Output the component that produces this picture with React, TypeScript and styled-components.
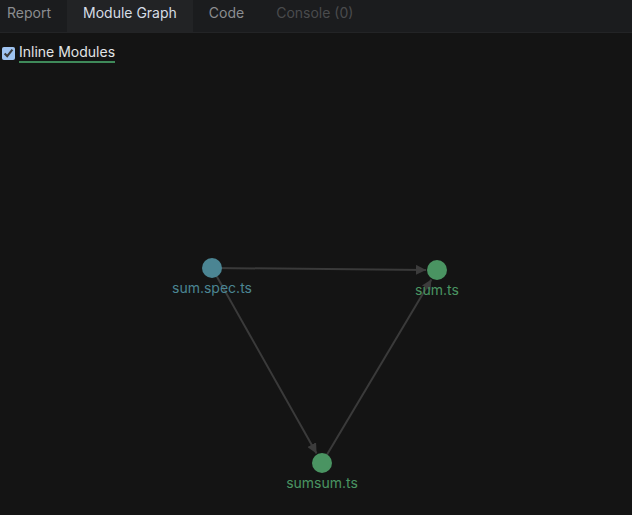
import React, { FC } from "react";
import styled, { createGlobalStyle } from "styled-components";

const GlobalStyle = createGlobalStyle`
  html, body {
    margin: 0;
    padding: 0;
    background: #141414;
    color-scheme: dark;
  }
  #root {
    height: 515px;
  }
`;

const StyledPage = styled.div`
  height: 100%;
  display: flex;
  flex-direction: column;
  background: #141414;
  font-family: Inter, "Open Sans", sans-serif;
  overflow: hidden;
`;

const StyledTabBar = styled.div`
  display: flex;
  height: 32px;
  background: #1b1c1e;
  border-bottom: 1px solid #232426;
  flex-shrink: 0;
`;

const StyledTabs = styled.div`
  display: flex;
  margin-left: -9px;
`;

const StyledTab = styled.div<{ $active?: boolean; $disabled?: boolean }>`
  display: flex;
  align-items: center;
  padding: 0 16px 7px;
  font-size: 14px;
  background: ${(p) => (p.$active ? "#222325" : "transparent")};
  color: ${(p) => (p.$active ? "#d6dde6" : p.$disabled ? "#4a4b4d" : "#8b8d90")};
`;

const StyledToolbar = styled.div`
  display: flex;
  align-items: center;
  height: 37px;
  padding: 2px 0 0 2px;
  flex-shrink: 0;
  box-sizing: border-box;
`;

const StyledCheck = styled.input`
  width: 13px;
  height: 13px;
  margin: 1px 4px 0 0;
  accent-color: #9fc3f0;
`;

const StyledLabel = styled.label`
  font-size: 14px;
  color: #e2e4e6;
  padding-bottom: 1px;
  border-bottom: 2px solid #3f8a5a;
  line-height: 17px;
`;

const StyledGraph = styled.div`
  flex: 1;
  min-height: 0;
`;

const StyledSvg = styled.svg`
  display: block;
  width: 100%;
  height: 100%;
  font-family: Inter, "Open Sans", sans-serif;
  font-size: 14px;
`;

// graph area starts at y = 70 in page coordinates
const TOP = 70;

const nodes = [
  { id: "spec", x: 212, y: 268, label: "sum.spec.ts", color: "#4b8593" },
  { id: "sum", x: 437, y: 270, label: "sum.ts", color: "#4a9462" },
  { id: "sumsum", x: 322, y: 463, label: "sumsum.ts", color: "#4a9462" },
];

const edges: [string, string][] = [
  ["spec", "sum"],
  ["spec", "sumsum"],
  ["sumsum", "sum"],
];

const R = 10;

const Graph: FC = () => {
  const byId = (id: string) => nodes.find((n) => n.id === id)!;
  return (
    <StyledSvg>
      <defs>
        <marker
          id="arrow"
          viewBox="0 0 10 10"
          refX="10"
          refY="5"
          markerWidth="5"
          markerHeight="5"
          orient="auto"
        >
          <path d="M0 0 L10 5 L0 10 z" fill="#3c3c3c" />
        </marker>
      </defs>
      {edges.map(([a, b]) => {
        const s = byId(a);
        const t = byId(b);
        const dx = t.x - s.x;
        const dy = t.y - s.y;
        const len = Math.hypot(dx, dy);
        const ex = t.x - (dx / len) * (R + 1);
        const ey = t.y - (dy / len) * (R + 1);
        return (
          <line
            key={a + b}
            x1={s.x}
            y1={s.y - TOP}
            x2={ex}
            y2={ey - TOP}
            stroke="#3a3a3a"
            strokeWidth={2}
            markerEnd="url(#arrow)"
          />
        );
      })}
      {nodes.map((n) => (
        <g key={n.id}>
          <circle cx={n.x} cy={n.y - TOP} r={R} fill={n.color} />
          <text x={n.x} y={n.y - TOP + 25} fill={n.color} textAnchor="middle">
            {n.label}
          </text>
        </g>
      ))}
    </StyledSvg>
  );
};

export default function App() {
  return (
    <StyledPage>
      <GlobalStyle />
      <StyledTabBar>
        <StyledTabs>
          <StyledTab>Report</StyledTab>
          <StyledTab $active>Module Graph</StyledTab>
          <StyledTab>Code</StyledTab>
          <StyledTab $disabled>Console (0)</StyledTab>
        </StyledTabs>
      </StyledTabBar>
      <StyledToolbar>
        <StyledCheck type="checkbox" id="inline" defaultChecked />
        <StyledLabel htmlFor="inline">Inline Modules</StyledLabel>
      </StyledToolbar>
      <StyledGraph>
        <Graph />
      </StyledGraph>
    </StyledPage>
  );
}
